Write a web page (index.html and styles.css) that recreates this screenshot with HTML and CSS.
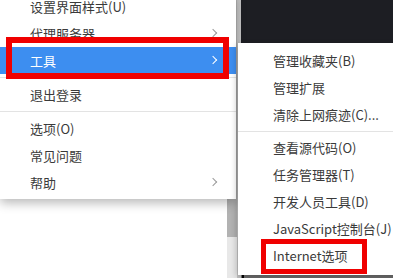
FILE: index.html
```html
<!DOCTYPE html>
<html lang="zh-CN">
<head>
  <meta charset="UTF-8">
  <title>菜单</title>
  <link rel="stylesheet" href="styles.css">
</head>
<body>
  <div class="page">
    <div class="page-left"></div>
    <div class="scrollbar">
      <div class="thumb"></div>
    </div>
    <div class="page-right">
      <div class="dark-pane"></div>
      <div class="bottom-bar"><span class="caret"></span></div>
    </div>

    <!-- main menu -->
    <ul class="menu main-menu">
      <li class="item">设置界面样式(U)</li>
      <li class="item has-sub">代理服务器</li>
      <li class="item has-sub active marked-wide">工具</li>
      <li class="sep"></li>
      <li class="item">退出登录</li>
      <li class="sep"></li>
      <li class="item">选项(O)</li>
      <li class="item">常见问题</li>
      <li class="item has-sub">帮助</li>
    </ul>

    <!-- tools submenu -->
    <ul class="menu sub-menu">
      <li class="item">管理收藏夹(B)</li>
      <li class="item">管理扩展</li>
      <li class="item">清除上网痕迹(C)...</li>
      <li class="sep"></li>
      <li class="item">查看源代码(O)</li>
      <li class="item">任务管理器(T)</li>
      <li class="item">开发人员工具(D)</li>
      <li class="item">JavaScript控制台(J)</li>
      <li class="item marked-small">Internet选项</li>
    </ul>
  </div>
</body>
</html>
```

FILE: styles.css
```css
body {
  margin: 0;
  width: 393px;
  height: 278px;
  overflow: hidden;
  font-family: "Noto Sans CJK SC", "Noto Sans", sans-serif;
}

.page {
  position: relative;
  display: flex;
  width: 393px;
  height: 278px;
  background: #fff;
}

.page-left {
  width: 227px;
  background: #fff;
}

.scrollbar {
  width: 10px;
  background: #e8e8e8;
}

.thumb {
  height: 237px;
  background: #b2b2b2;
}

.page-right {
  flex: 1;
  display: flex;
  flex-direction: column;
  border-left: 4px solid #c4c4c4;
}

.dark-pane {
  height: 43px;
  background: #1d1e23;
}

.bottom-bar {
  margin-top: auto;
  height: 3px;
  background: #6a6a6a;
  padding-left: 1px;
}

.caret {
  display: block;
  width: 2px;
  height: 3px;
  background: #000;
}

/* menus */
.menu {
  position: absolute;
  margin: 0;
  padding: 0;
  list-style: none;
  background: #fff;
  font-size: 13px;
  color: #3a3a3a;
}

.main-menu {
  top: -7px;
  left: 0;
  width: 236px;
  padding-bottom: 3px;
  box-shadow: 0 4px 10px rgba(0, 0, 0, 0.28);
}

.sub-menu {
  top: 43px;
  left: 238px;
  width: 160px;
  padding-top: 5px;
  height: 227px;
  box-shadow: -2px 2px 6px rgba(0, 0, 0, 0.2);
}

.item {
  position: relative;
  height: 27px;
  line-height: 27px;
  padding-left: 30px;
  white-space: nowrap;
}

.sub-menu .item {
  padding-left: 35px;
  height: 26.8px;
  line-height: 26.8px;
}

.sep {
  height: 1px;
  margin: 3px 0;
  background: #e3e3e3;
}

.has-sub::after {
  content: "";
  position: absolute;
  right: 20px;
  top: 10px;
  width: 5px;
  height: 5px;
  border-top: 1px solid #9a9a9a;
  border-right: 1px solid #9a9a9a;
  transform: rotate(45deg);
}

.item.active {
  background: #3d8ef0;
  color: #fff;
}

.item.active::after {
  border-color: #fff;
}

/* red annotation boxes */
.marked-wide::before {
  content: "";
  position: absolute;
  top: -10px;
  left: 6px;
  right: 7px;
  bottom: -5px;
  border: 6px solid #f00000;
  z-index: 2;
}

.marked-small::before {
  content: "";
  position: absolute;
  top: -4px;
  left: 23px;
  width: 96px;
  bottom: -5px;
  border: 5px solid #f00000;
}
```
